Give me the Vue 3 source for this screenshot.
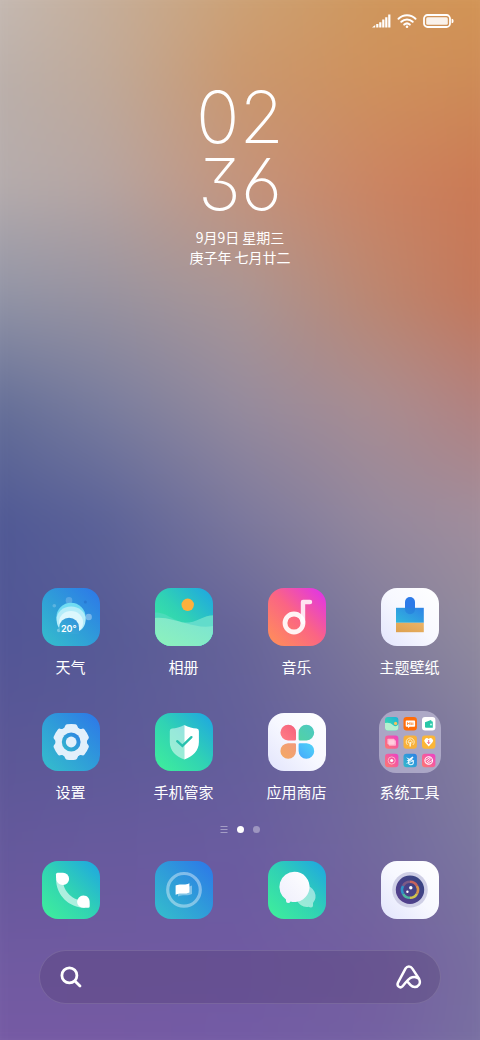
<template>
  <div class="screen">
    <!-- 壁纸：逐行渐变叠加，再整体柔化 -->
    <div class="wallpaper" aria-hidden="true">
      <div class="bands">
        <div v-for="(band, index) in bands" :key="index" class="band" :style="band"></div>
      </div>
    </div>

    <header class="status-bar">
      <svg width="19" height="14" viewBox="0 0 19 14" fill="#fff" role="img" aria-label="信号">
        <path d="M0 13.4 L3.2 11 V13.4Z M4.2 10h2.2v3.4H4.2z M7.2 8.2h2.2v5.2H7.2z M10.2 5.6h2.2v7.8h-2.2z M13.2 3.2h2.2v10.2h-2.2z M16.2.4h2.2v13h-2.2z" />
      </svg>
      <svg width="20" height="14" viewBox="0 0 20 14" fill="none" stroke="#fff" stroke-width="2" stroke-linecap="round" role="img" aria-label="无线网络">
        <path d="M1.5 4.8 C6.2 0 13.8 0 18.5 4.8" />
        <path d="M4.3 7.8 C7.5 4.6 12.5 4.6 15.7 7.8" />
        <path d="M7.2 10.6 C8.8 9.2 11.2 9.2 12.8 10.6" />
        <circle cx="10" cy="12.7" r="1.3" fill="#fff" stroke="none" />
      </svg>
      <svg width="31" height="14" viewBox="0 0 31 14" role="img" aria-label="电量">
        <rect x="1" y="1" width="26" height="12" rx="3.5" fill="none" stroke="#fff" stroke-width="1.8" />
        <rect x="3.2" y="3.2" width="21.6" height="7.6" rx="1.5" fill="#fff" opacity=".88" />
        <path d="M28.6 4.8 q2 0 2 2.2 q0 2.2-2 2.2z" fill="#fff" />
      </svg>
    </header>

    <section class="clock">
      <div class="time">{{ hour }}</div>
      <div class="time">{{ minute }}</div>
      <p class="date">9月9日 星期三</p>
      <p class="date">庚子年 七月廿二</p>
    </section>

    <main class="apps">
      <button v-for="app in apps" :key="app.id" type="button" class="app">
        <svg v-if="app.id === 'folder'" class="icon folder" viewBox="0 0 62 62">
          <g transform="translate(6 6)">
            <rect width="13.4" height="13.4" rx="3" fill="url(#green)" />
            <path d="M0 6 Q5 5 8 8 T13.4 7 V10.4 a3 3 0 0 1-3 3 h-7.4 a3 3 0 0 1-3-3z" fill="#b5f0cf" />
            <circle cx="10.6" cy="6.4" r="1.6" fill="#f6c45c" />
          </g>
          <g transform="translate(24.5 6)">
            <rect width="13.4" height="13.4" rx="3" fill="#ff6d0a" />
            <path d="M3 3.5h7.8q.8 0 .8.8v4.6q0 .8-.8.8H6.2l-1.6 1.6V9.7H3q-.8 0-.8-.8V4.3q0-.8.8-.8z" fill="#fff" />
            <path d="M4 8V5.5l1.2 1.4L6.4 5.5V8 M7.8 5.5V8 M9.4 5.5V8" fill="none" stroke="#ff7d20" stroke-width=".8" />
          </g>
          <g transform="translate(43 6)">
            <rect width="13.4" height="13.4" rx="3" fill="#fff" />
            <path d="M3 5.2 L9 3 l.8 1.6 h1 v6.2H4q-1 0-1-1z" fill="#28c7a8" />
            <circle cx="9" cy="7.5" r=".9" fill="#d6fff2" />
          </g>
          <g transform="translate(6 24.4)">
            <rect width="13.4" height="13.4" rx="3" fill="url(#pink)" />
            <rect x="2.4" y="3.4" width="7.2" height="5.6" rx=".8" fill="#ffb8cf" />
            <rect x="3.8" y="4.8" width="7.2" height="5.6" rx=".8" fill="#ffd5e3" opacity=".7" />
          </g>
          <g transform="translate(24.5 24.4)" fill="none" stroke="#fff2cf" stroke-width=".9">
            <rect width="13.4" height="13.4" rx="3" fill="#f8b13a" stroke="none" />
            <path d="M4 9.5 a4 4 0 1 1 5.4 0 M5.4 8 a2 2 0 1 1 2.6 0" />
            <path d="M6.7 6.7 V11" stroke-width="1.6" />
          </g>
          <g transform="translate(43 24.4)">
            <rect width="13.4" height="13.4" rx="3" fill="#fbb638" />
            <path d="M6.7 11 L3.1 7.2 a2.5 2.5 0 0 1 3.6-3.7 a2.5 2.5 0 0 1 3.6 3.7z" fill="#fff" />
            <path d="M6.7 4.6v3.6 M5.4 6.8l1.3 1.5 1.3-1.5" fill="none" stroke="#f0607a" stroke-width=".9" />
          </g>
          <g transform="translate(6 42.8)">
            <rect width="13.4" height="13.4" rx="3" fill="url(#pink)" />
            <circle cx="6.7" cy="6.7" r="3.6" fill="none" stroke="#ffb9cc" stroke-width=".9" />
            <circle cx="6.7" cy="6.7" r="1.6" fill="#fff" />
          </g>
          <g transform="translate(24.5 42.8)">
            <rect width="13.4" height="13.4" rx="3" fill="url(#blue)" />
            <path d="M2.6 3.4 L6 5 L9 2.8 L10 3.4 L8 6 L6 7.6 L3 6.6 L5 6z" fill="#fff" />
            <circle cx="7.4" cy="8.4" r="2.5" fill="none" stroke="#dff5ff" stroke-width="1.1" />
            <path d="M3 9.6 L10.6 6.8" stroke="#fff" stroke-width=".8" />
          </g>
          <g transform="translate(43 42.8)" fill="none" stroke="#fff" stroke-width="1.1">
            <rect width="13.4" height="13.4" rx="3" fill="url(#pink)" stroke="none" />
            <circle cx="6.7" cy="6.7" r="3.8" />
            <path d="M3.6 6.6 L8 3.8 M4.6 8.6 L8.8 4.8 M5.4 9.6 L9.8 6.8" stroke-width=".9" />
          </g>
        </svg>

        <svg v-else class="icon" :class="app.tone" viewBox="0 0 58 58">
          <g v-if="app.id === 'weather'">
            <circle cx="27" cy="12.4" r="3.3" fill="#fff" opacity=".2" />
            <circle cx="46.7" cy="29" r="3.2" fill="#fff" opacity=".35" />
            <circle cx="12.3" cy="17.7" r="1.8" fill="#fff" opacity=".22" />
            <circle cx="43.4" cy="14" r="1.5" fill="#1f62b8" opacity=".4" />
            <circle cx="16.8" cy="42.4" r="1.8" fill="#fff" opacity=".35" />
            <circle cx="29" cy="29.4" r="14.6" fill="#71dcf3" />
            <path d="M14.6 31 a14.5 12.4 0 0 1 29 0 C43.6 37 41 41 37 43 H20 C16 40 14.6 36 14.6 31z" fill="#b4ecf9" />
            <path d="M17 34 a12 11 0 0 1 24 0 C41 38 40 41 36 43.4 H20 C17.6 40 17 37 17 34z" fill="#dcf7fd" />
            <path d="M17.2 39.6 a9.9 9.9 0 0 1 19.8 0 V46 H20 Q17.4 44 17.2 39.6z" fill="url(#sky)" />
            <text x="19" y="44" class="degree">20°</text>
          </g>
          <g v-else-if="app.id === 'photos'">
            <circle cx="32.7" cy="16.8" r="6.2" fill="#fdb03c" />
            <path d="M0 24.6 C14 24.5 18 35 34 34.8 C44 34.4 48 27.6 58 27.6 V58 H0z" fill="#4bdcba" />
            <path d="M28 34.8 C42 35.6 46 27.8 58 27.6 V58 H28z" fill="#62dccb" />
            <path d="M0 30 C12 29 20 33 30 35 C40 37.6 48 40 58 38 V58 H0z" fill="url(#meadow)" />
          </g>
          <g v-else-if="app.id === 'music'">
            <path d="M35 34 V14 H42" fill="none" stroke="#ffe3f1" stroke-width="4.4" stroke-linecap="round" stroke-linejoin="round" />
            <circle cx="26" cy="35" r="9" fill="none" stroke="#fff" stroke-width="4.8" opacity=".92" />
          </g>
          <g v-else-if="app.id === 'theme'">
            <path d="M24 20 V14 a5 5 0 0 1 10 0 V20z" fill="#2d7ae8" />
            <rect x="15" y="19.8" width="27.8" height="15" fill="url(#brush)" />
            <path d="M24 19.8 h10 v1.5 a5 5 0 0 1-10 0z" fill="#1c67d8" opacity=".35" />
            <rect x="15" y="34.8" width="27.8" height="9.4" fill="url(#wood)" />
          </g>
          <g v-else-if="app.id === 'settings'">
            <g fill="#e2f0fb">
              <circle cx="29.2" cy="29" r="15.6" />
              <path v-for="n in 6" :key="n" :transform="`rotate(${n * 60} 29.2 29)`"
                    d="M20 17 Q22.8 15 23.2 12.8 Q23.6 11.4 25 11.2 Q29.2 10.6 33.4 11.2 Q34.8 11.4 35.2 12.8 Q35.6 15 38.4 17z" />
            </g>
            <circle cx="29.2" cy="29" r="9.4" fill="url(#blue)" />
            <circle cx="29.2" cy="29" r="5.4" fill="#e2f0fb" />
          </g>
          <g v-else-if="app.id === 'security'">
            <path d="M29.3 12 C25 14.4 21 15.4 17 15.6 Q14.8 15.8 14.8 18 V29 C14.8 38 21 43.6 29.3 46.4z" fill="#fff" opacity=".5" />
            <path d="M29.3 12 C33.6 14.4 37.6 15.4 41.6 15.6 Q43.9 15.8 43.9 18 V29 C43.9 38 37.6 43.6 29.3 46.4z" fill="#fff" />
            <path d="M22.2 28.2 L27.4 32.8 L36.4 24.2" fill="none" stroke="#27c1ae" stroke-width="2.4" stroke-linecap="round" />
          </g>
          <g v-else-if="app.id === 'store'">
            <path d="M26.8 27.4 H20 a7.8 7.8 0 1 1 8-7.8 V26.2 q0 1.2-1.2 1.2z" fill="url(#petal1)" />
            <path d="M31.8 27.4 H38.6 a7.8 7.8 0 1 0-8-7.8 V26.2 q0 1.2 1.2 1.2z" fill="url(#petal2)" />
            <path d="M26.8 30.2 H20 a7.8 7.8 0 1 0 8 7.8 V31.4 q0-1.2-1.2-1.2z" fill="url(#petal3)" />
            <path d="M31.8 30.2 H38.6 a7.8 7.8 0 1 1-8 7.8 V31.4 q0-1.2 1.2-1.2z" fill="url(#petal4)" />
          </g>
        </svg>
        <span class="label">{{ app.name }}</span>
      </button>
    </main>

    <nav class="pager" aria-label="桌面页">
      <svg width="8" height="8" viewBox="0 0 8 8" fill="#fff" opacity=".4">
        <path d="M.5 1h7v1h-7z M.5 4h7v1h-7z M.5 7h7v1h-7z" />
      </svg>
      <span class="dot active"></span>
      <span class="dot"></span>
    </nav>

    <footer class="dock">
      <button type="button" class="app" aria-label="电话">
        <svg class="icon green" viewBox="0 0 58 58">
          <path d="M14 18 C14 34 27 46.8 43 46.8 V40 C31 39.6 21.6 31 21 20z" fill="#fff" opacity=".6" />
          <path d="M15.5 11.8 H21 a6.1 6.1 0 0 1 0 12.2 C16 24 14 20 14 16 V13.3 q0-1.5 1.5-1.5z" fill="#fff" />
          <path d="M46.2 46.8 H41.2 a6.1 6.1 0 0 1 0-12.2 C46 34.6 47.7 38 47.7 42 V45.3 q0 1.5-1.5 1.5z" fill="#fff" />
        </svg>
      </button>
      <button type="button" class="app" aria-label="浏览器">
        <svg class="icon blue" viewBox="0 0 58 58">
          <circle cx="29" cy="28.8" r="16.3" fill="none" stroke="#fff" stroke-width="3.2" opacity=".4" />
          <path d="M23 26 C28 24 31 27 37 24.4 V33 C31 35.6 28 33 23 35.6z" fill="#fff" opacity=".4" />
          <path d="M20.6 24.6 C26 22 29 25 34.4 22.2 V31.4 C29 34 26 31 20.6 33.8z" fill="#fff" />
        </svg>
      </button>
      <button type="button" class="app" aria-label="短信">
        <svg class="icon green" viewBox="0 0 58 58">
          <path d="M37 24.5 a10.8 10.8 0 0 1 8 17.6 V44.6 q0 2-2 2 q-1.6 0-2.2-.8 A10.8 10.8 0 1 1 37 24.5z" fill="#fff" opacity=".5" />
          <path d="M26.4 10.8 a15.1 15.1 0 1 1-3.8 29.7 q-.8 1.5-2.5 1.5 q-2 0-2.1-2 V38.4 A15.1 15.1 0 0 1 26.4 10.8z" fill="url(#snow)" />
        </svg>
      </button>
      <button type="button" class="app" aria-label="相机">
        <svg class="icon white" viewBox="0 0 58 58">
          <circle cx="29" cy="28.8" r="17.8" fill="#cfcfe6" />
          <circle cx="29" cy="28.8" r="14.2" fill="url(#lens)" />
          <g fill="none" stroke-width="2.6">
            <path d="M29 20.8 A8 8 0 0 1 35.9 24.8" stroke="#c8645c" />
            <path d="M35.9 24.8 A8 8 0 0 1 35.9 32.8" stroke="#d8924a" />
            <path d="M35.9 32.8 A8 8 0 0 1 29 36.8" stroke="#cfc44e" />
            <path d="M29 36.8 A8 8 0 0 1 22.1 32.8" stroke="#4fb7a0" />
            <path d="M22.1 32.8 A8 8 0 0 1 22.1 24.8" stroke="#2f93c4" />
            <path d="M22.1 24.8 A8 8 0 0 1 29 20.8" stroke="#7c5b86" />
          </g>
          <circle cx="29.8" cy="26.8" r="1.7" fill="#fff" />
          <circle cx="26.4" cy="30.8" r="1.2" fill="#fff" />
        </svg>
      </button>
    </footer>

    <form class="search" @submit.prevent>
      <label for="keyword" class="search-icon" aria-label="搜索">
        <svg width="22" height="22" viewBox="0 0 22 22" fill="none" stroke="#fff" stroke-width="2.8" stroke-linecap="round">
          <circle cx="9.4" cy="9.4" r="7.5" />
          <path d="M15.4 15.4 L20 20" />
        </svg>
      </label>
      <input id="keyword" v-model="keyword" type="text" />
      <button type="button" class="assistant" aria-label="小爱同学">
        <svg width="26" height="24" viewBox="0 0 26 24" fill="none" stroke="#fff" stroke-width="2.5" stroke-linecap="round" stroke-linejoin="round">
          <path d="M11.4 16.6 L14.6 20.2 C17 22.8 21 22.8 23 19.8 C24.4 17.6 24 15.6 23 13.8 L16.2 3.4 C14.6 .8 11.2 .8 9.6 3.4 L2 17.6 C.4 20.8 4 23.8 6.4 21.4 C9 18.6 10.6 15.4 14 13.2 C17 11.6 20.6 11.8 23 13.8" />
        </svg>
      </button>
    </form>

    <svg class="defs" width="0" height="0" aria-hidden="true">
      <defs>
        <linearGradient v-for="g in gradients" :id="g.id" :key="g.id" x1="0" y1="1" x2="1" y2="0">
          <stop offset="0" :stop-color="g.from" />
          <stop offset="1" :stop-color="g.to" />
        </linearGradient>
      </defs>
    </svg>
  </div>
</template>

<script setup>
import { ref, computed } from 'vue';

const hour = ref('02');
const minute = ref('36');
const keyword = ref('');

const apps = [
  { id: 'weather', name: '天气', tone: 'blue' },
  { id: 'photos', name: '相册', tone: 'green' },
  { id: 'music', name: '音乐', tone: 'pink' },
  { id: 'theme', name: '主题壁纸', tone: 'white' },
  { id: 'settings', name: '设置', tone: 'blue' },
  { id: 'security', name: '手机管家', tone: 'green' },
  { id: 'store', name: '应用商店', tone: 'white' },
  { id: 'folder', name: '系统工具' }
];

// 图标内部用到的渐变，方向都是左下到右上
const gradients = [
  { id: 'green', from: '#3fe6a0', to: '#1fb0dc' },
  { id: 'blue', from: '#33bccb', to: '#2d7fe6' },
  { id: 'pink', from: '#ff7a6e', to: '#ec3fc8' },
  { id: 'sky', from: '#38b4d4', to: '#3390dc' },
  { id: 'meadow', from: '#8ef2bb', to: '#7ae3d4' },
  { id: 'brush', from: '#30b8dc', to: '#2f82e6' },
  { id: 'wood', from: '#dda04e', to: '#ebb468' },
  { id: 'petal1', from: '#ff7f86', to: '#f55f7c' },
  { id: 'petal2', from: '#52d2a4', to: '#4cc8c4' },
  { id: 'petal3', from: '#f3a962', to: '#f29a7c' },
  { id: 'petal4', from: '#46a8fb', to: '#4fd4f8' },
  { id: 'snow', from: '#eeeefc', to: '#ffffff' },
  { id: 'lens', from: '#5a3f90', to: '#33457f' }
];

// 壁纸取色：每行五个颜色，行间距均分
const wallpaper = [
  ['#c9c1bd', '#c8b09a', '#cda578', '#d0995c', '#d69852'],
  ['#bab2b0', '#c0aa9a', '#cb986e', '#cf915c', '#ce8a55'],
  ['#b4aeb0', '#b6a5a2', '#c4947d', '#cb8462', '#cb7650'],
  ['#8f94a8', '#9893a0', '#aa9696', '#bc8670', '#c67354'],
  ['#5e6a96', '#787c9e', '#958b9e', '#a98d92', '#b57e7a'],
  ['#4c5694', '#5b6298', '#7b789d', '#95899e', '#a58f9c'],
  ['#505496', '#565a96', '#666499', '#817c9c', '#96909f'],
  ['#5a5696', '#5c5a98', '#635f9b', '#736d9b', '#8984a0'],
  ['#64589b', '#685a9e', '#6a5ca0', '#72699e', '#7f7ba0'],
  ['#705aa2', '#705aa0', '#705aa2', '#735fa0', '#7a73a0'],
  ['#785aa5', '#785aa5', '#755ca6', '#7562a3', '#7a75a2']
];

const bands = computed(() => wallpaper.map((colors, i) => {
  const step = 100 / (wallpaper.length - 1);
  const style = { backgroundImage: `linear-gradient(90deg, ${colors.join(', ')})` };
  if (i > 0) {
    style.maskImage = `linear-gradient(180deg, transparent ${(i - 1) * step}%, #000 ${i * step}%)`;
  }
  return style;
}));
</script>

<style>
body {
  margin: 0;
}
</style>

<style scoped>
.screen {
  position: relative;
  display: flex;
  flex-direction: column;
  box-sizing: border-box;
  min-height: 100vh;
  padding-bottom: 36px;
  color: #fff;
  font-family: "Noto Sans CJK SC", sans-serif;
}
.wallpaper,
.band {
  position: absolute;
  inset: 0;
}
.wallpaper {
  z-index: -1;
  overflow: hidden;
}
.bands {
  position: absolute;
  inset: -36px;
  filter: blur(18px);
}
.status-bar {
  display: flex;
  justify-content: flex-end;
  align-items: center;
  gap: 6px;
  height: 42px;
  padding-right: 26px;
}
.clock {
  margin-top: 41px;
  text-align: center;
}
.time {
  font-family: Inter, sans-serif;
  font-size: 72px;
  font-weight: 200;
  line-height: 67px;
  font-feature-settings: "cv09", "ss01";
}
.date {
  margin: 0;
  font-size: 14px;
  line-height: 20px;
}
.time + .date {
  margin-top: 10px;
}
button {
  padding: 0;
  border: 0;
  background: none;
  color: inherit;
  font: inherit;
  cursor: pointer;
}
.apps,
.dock {
  display: grid;
  grid-template-columns: repeat(4, 1fr);
  padding: 0 14px;
}
.apps {
  margin-top: auto;
  row-gap: 35px;
}
.app {
  display: flex;
  flex-direction: column;
  align-items: center;
}
.icon {
  width: 58px;
  height: 58px;
  border-radius: 16px;
}
.folder {
  width: 62px;
  height: 62px;
  margin: -2px;
  border-radius: 17px;
  background: rgba(205, 202, 225, 0.6);
}
.blue {
  background: linear-gradient(45deg, #35bfcb, #2f9cd9 50%, #2d76e9);
}
.green {
  background: linear-gradient(45deg, #40f09a, #30d2b4 50%, #1ea4e4);
}
.pink {
  background: linear-gradient(45deg, #ff9256, #fb6583 50%, #de30f0);
}
.white {
  background: linear-gradient(45deg, #e2e4fc, #f7f8ff 50%, #fff);
}
.degree {
  font-family: Inter, sans-serif;
  font-size: 9px;
  font-weight: 600;
  fill: #fff;
}
.label {
  margin-top: 10px;
  font-size: 15px;
  line-height: 22px;
  white-space: nowrap;
}
.pager {
  display: flex;
  justify-content: center;
  align-items: center;
  gap: 9px;
  margin: 22px 0 28px;
}
.dot {
  width: 7px;
  height: 7px;
  border-radius: 50%;
  background: #fff;
  opacity: 0.35;
}
.dot.active {
  opacity: 1;
}
.search {
  display: flex;
  align-items: center;
  box-sizing: border-box;
  height: 54px;
  margin: 31px 39px 0;
  padding: 0 18px 0 20px;
  border: 1px solid rgba(255, 255, 255, 0.12);
  border-radius: 27px;
  background: rgba(70, 50, 100, 0.25);
}
.search-icon,
.assistant {
  display: flex;
}
.search input {
  flex: 1;
  min-width: 0;
  margin: 0 12px;
  padding: 0;
  border: 0;
  outline: 0;
  background: none;
  color: #fff;
  font: inherit;
}
.defs {
  position: absolute;
}
</style>
